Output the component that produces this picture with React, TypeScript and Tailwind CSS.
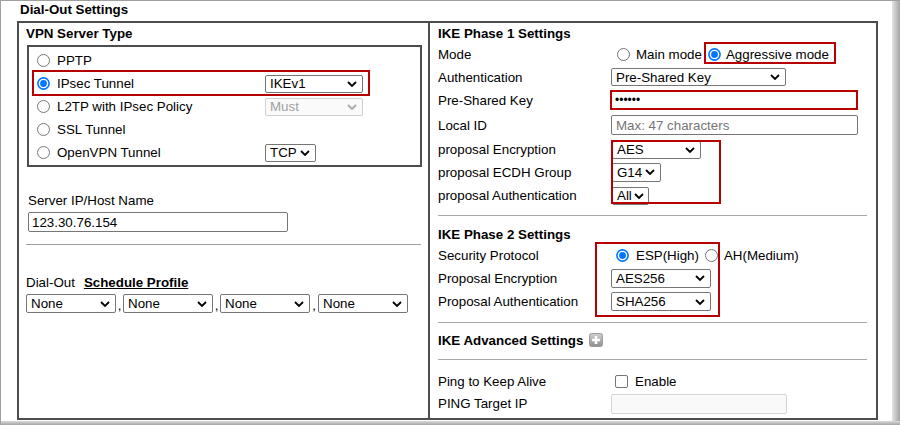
import { clsx, type ClassValue } from 'clsx';
import { twMerge } from 'tailwind-merge';

function cn(...inputs: ClassValue[]) {
  return twMerge(clsx(inputs));
}

function Chevron({ muted }: { muted?: boolean }) {
  return (
    <svg width="10" height="6" viewBox="0 0 10 6" className="shrink-0">
      <path d="M1 1l4 4 4-4" fill="none" stroke={muted ? '#a8a8a8' : '#000'} strokeWidth="1.8" />
    </svg>
  );
}

function Select({ value, className, disabled }: { value: string; className: string; disabled?: boolean }) {
  return (
    <div
      className={cn(
        'flex h-[18px] items-center justify-between rounded-[2px] border pl-[4px] pr-[5px] leading-[15px]',
        disabled ? 'border-[#d0d0d0] bg-[#fafafa] text-[#a0a0a0]' : 'border-[#767676] bg-white text-black',
        className
      )}
    >
      <span>{value}</span>
      <Chevron muted={disabled} />
    </div>
  );
}

function Radio({ checked }: { checked?: boolean }) {
  return (
    <svg width="13" height="13" viewBox="0 0 13 13" className="shrink-0">
      {checked ? (
        <>
          <circle cx="6.5" cy="6.5" r="5.6" fill="#fff" stroke="#0075ff" strokeWidth="1.6" />
          <circle cx="6.5" cy="6.5" r="3.4" fill="#0075ff" />
        </>
      ) : (
        <circle cx="6.5" cy="6.5" r="6" fill="#fff" stroke="#767676" strokeWidth="1" />
      )}
    </svg>
  );
}

function PlusIcon() {
  return (
    <svg width="14" height="14" viewBox="0 0 14 14" className="ml-[6px] shrink-0">
      <defs>
        <linearGradient id="plusbg" x1="0" y1="0" x2="0" y2="1">
          <stop offset="0" stopColor="#cfcfcf" />
          <stop offset="1" stopColor="#8e8e8e" />
        </linearGradient>
      </defs>
      <rect x="0.5" y="0.5" width="13" height="13" rx="2" fill="url(#plusbg)" stroke="#9c9c9c" />
      <path d="M7 3v8M3 7h8" stroke="#fff" strokeWidth="2.6" />
    </svg>
  );
}

function Row({ label, className, children }: { label: string; className: string; children?: React.ReactNode }) {
  return (
    <div className={cn('grid grid-cols-[173px_1fr] items-center leading-[15px]', className)}>
      <span>{label}</span>
      <div className="flex items-center">{children}</div>
    </div>
  );
}

function Mark({ className }: { className: string }) {
  return <div className={cn('pointer-events-none absolute border-2 border-[#b80000]', className)} />;
}

const vpnTypes = [
  { name: 'PPTP', h: 'h-[24px]' },
  { name: 'IPsec Tunnel', h: 'h-[23px]', checked: true, select: 'IKEv1' },
  { name: 'L2TP with IPsec Policy', h: 'h-[23px]', select: 'Must', disabled: true },
  { name: 'SSL Tunnel', h: 'h-[23px]' },
  { name: 'OpenVPN Tunnel', h: 'h-[23px]', select: 'TCP', narrow: true },
];

export default function App() {
  return (
    <div className="relative flex h-[425px] w-[900px] flex-col overflow-hidden border-l border-t border-[#a0a0a0] bg-white font-['Liberation_Sans',Arial,sans-serif] text-[13.33px] text-black">
      <div className="flex flex-1">
        <div className="flex-1">
          <div className="h-[20px] pl-[19px] font-bold leading-[17px]">Dial-Out Settings</div>

          <div className="ml-[16px] flex h-[399px] w-[861px] border-2 border-[#4d4d4d]">
            {/* left column */}
            <div className="w-[409px] shrink-0">
              <div className="flex h-[20px] items-center pl-[7px] font-bold leading-[15px]">VPN Server Type</div>
              <div className="ml-[8px] mt-[2px] h-[122px] w-[395px] border-2 border-[#4d4d4d] pl-[8px] pt-[1px]">
                {vpnTypes.map((t) => (
                  <div key={t.name} className={cn('flex items-center leading-[15px]', t.h)}>
                    <div className="flex w-[228px] items-center">
                      <Radio checked={t.checked} />
                      <span className="ml-[7px]">{t.name}</span>
                    </div>
                    {t.select && (
                      <Select value={t.select} disabled={t.disabled} className={t.narrow ? 'w-[51px]' : 'w-[98px]'} />
                    )}
                  </div>
                ))}
              </div>

              <div className="mt-[23px] flex h-[20px] items-center pl-[9px] leading-[15px]">Server IP/Host Name</div>
              <input
                readOnly
                value="123.30.76.154"
                className="ml-[9px] mt-[2px] block h-[20px] w-[260px] rounded-[2px] border border-[#767676] bg-white px-[3px] text-[13.33px] leading-[15px] outline-none"
              />
              <div className="ml-[7px] mt-[12px] h-px w-[395px] bg-[#a0a0a0]" />

              <div className="mt-[27px] flex h-[20px] items-center pl-[7px] leading-[15px]">
                <span>Dial-Out</span>
                <span className="ml-[9px] font-bold underline">Schedule Profile</span>
              </div>
              <div className="mt-[2px] flex items-center pl-[7px] leading-[15px]">
                <Select value="None" className="h-[19px] w-[90px]" />
                <span className="w-[7px] self-end text-center">,</span>
                <Select value="None" className="h-[19px] w-[90px]" />
                <span className="w-[7px] self-end text-center">,</span>
                <Select value="None" className="h-[19px] w-[90px]" />
                <span className="w-[8px] self-end text-center">,</span>
                <Select value="None" className="h-[19px] w-[90px]" />
              </div>
            </div>

            {/* right column */}
            <div className="flex-1 border-l-2 border-[#4d4d4d] pl-[8px]">
              <div className="flex h-[20px] items-center font-bold leading-[15px]">IKE Phase 1 Settings</div>
              <Row label="Mode" className="h-[22px]">
                <span className="ml-[6px]"><Radio /></span>
                <span className="ml-[6px]">Main mode</span>
                <span className="ml-[6px]"><Radio checked /></span>
                <span className="ml-[5px]">Aggressive mode</span>
              </Row>
              <Row label="Authentication" className="h-[24px]">
                <Select value="Pre-Shared Key" className="w-[175px]" />
              </Row>
              <Row label="Pre-Shared Key" className="h-[22px]">
                <input
                  readOnly
                  type="password"
                  value="123456"
                  className="-ml-px block h-[20px] w-[248px] border-2 border-[#b80000] bg-white px-[3px] text-[12px] leading-[15px] outline-none"
                />
              </Row>
              <Row label="Local ID" className="h-[28px]">
                <input
                  readOnly
                  placeholder="Max: 47 characters"
                  className="block h-[20px] w-[247px] rounded-[2px] border border-[#767676] bg-white px-[4px] text-[13.33px] leading-[15px] outline-none placeholder:text-[#757575]"
                />
              </Row>
              <Row label="proposal Encryption" className="h-[21px]">
                <Select value="AES" className="ml-px w-[89px]" />
              </Row>
              <Row label="proposal ECDH Group" className="h-[24px]">
                <Select value="G14" className="ml-px h-[19px] w-[49px]" />
              </Row>
              <Row label="proposal Authentication" className="h-[23px]">
                <Select value="All" className="ml-px w-[37px] pr-[4px]" />
              </Row>

              <div className="mt-[8px] h-px w-[429px] bg-[#a8a8a8]" />

              <div className="mt-[8px] flex h-[21px] items-center font-bold leading-[15px]">IKE Phase 2 Settings</div>
              <Row label="Security Protocol" className="h-[21px]">
                <span className="ml-[5px]"><Radio checked /></span>
                <span className="ml-[7px]">ESP(High)</span>
                <span className="ml-[6px]"><Radio /></span>
                <span className="ml-[6px]">AH(Medium)</span>
              </Row>
              <Row label="Proposal Encryption" className="h-[24px]">
                <Select value="AES256" className="h-[19px] w-[100px]" />
              </Row>
              <Row label="Proposal Authentication" className="h-[23px]">
                <Select value="SHA256" className="h-[19px] w-[100px]" />
              </Row>

              <div className="mt-[9px] h-px w-[429px] bg-[#a8a8a8]" />

              <div className="mt-[8px] flex h-[18px] items-center font-bold leading-[15px]">
                <span>IKE Advanced Settings</span>
                <PlusIcon />
              </div>

              <div className="mt-[10px] h-px w-[429px] bg-[#a8a8a8]" />

              <Row label="Ping to Keep Alive" className="mt-[10px] h-[22px]">
                <span className="ml-[4px] block h-[13px] w-[13px] rounded-[2px] border border-[#767676] bg-white" />
                <span className="ml-[7px]">Enable</span>
              </Row>
              <Row label="PING Target IP" className="h-[23px]">
                <input
                  readOnly
                  disabled
                  className="block h-[20px] w-[176px] rounded-[2px] border border-[#d4d4d4] bg-[#f9f9f9] outline-none"
                />
              </Row>
            </div>
          </div>
        </div>
        <div className="w-[8px] shrink-0 bg-linear-to-r from-[#e2e2e2] via-[#c4c4c4] to-[#a4a4a4]" />
      </div>
      <div className="h-[4px] shrink-0 bg-linear-to-b from-[#dadada] via-[#c0c0c0] to-[#a4a4a4]" />

      {/* highlight annotations drawn over the form */}
      <Mark className="left-[31px] top-[69px] h-[26px] w-[338px]" />
      <Mark className="left-[703px] top-[41px] h-[22px] w-[132px]" />
      <Mark className="left-[610px] top-[139px] h-[64px] w-[110px]" />
      <Mark className="left-[594px] top-[241px] h-[75px] w-[125px]" />
    </div>
  );
}
